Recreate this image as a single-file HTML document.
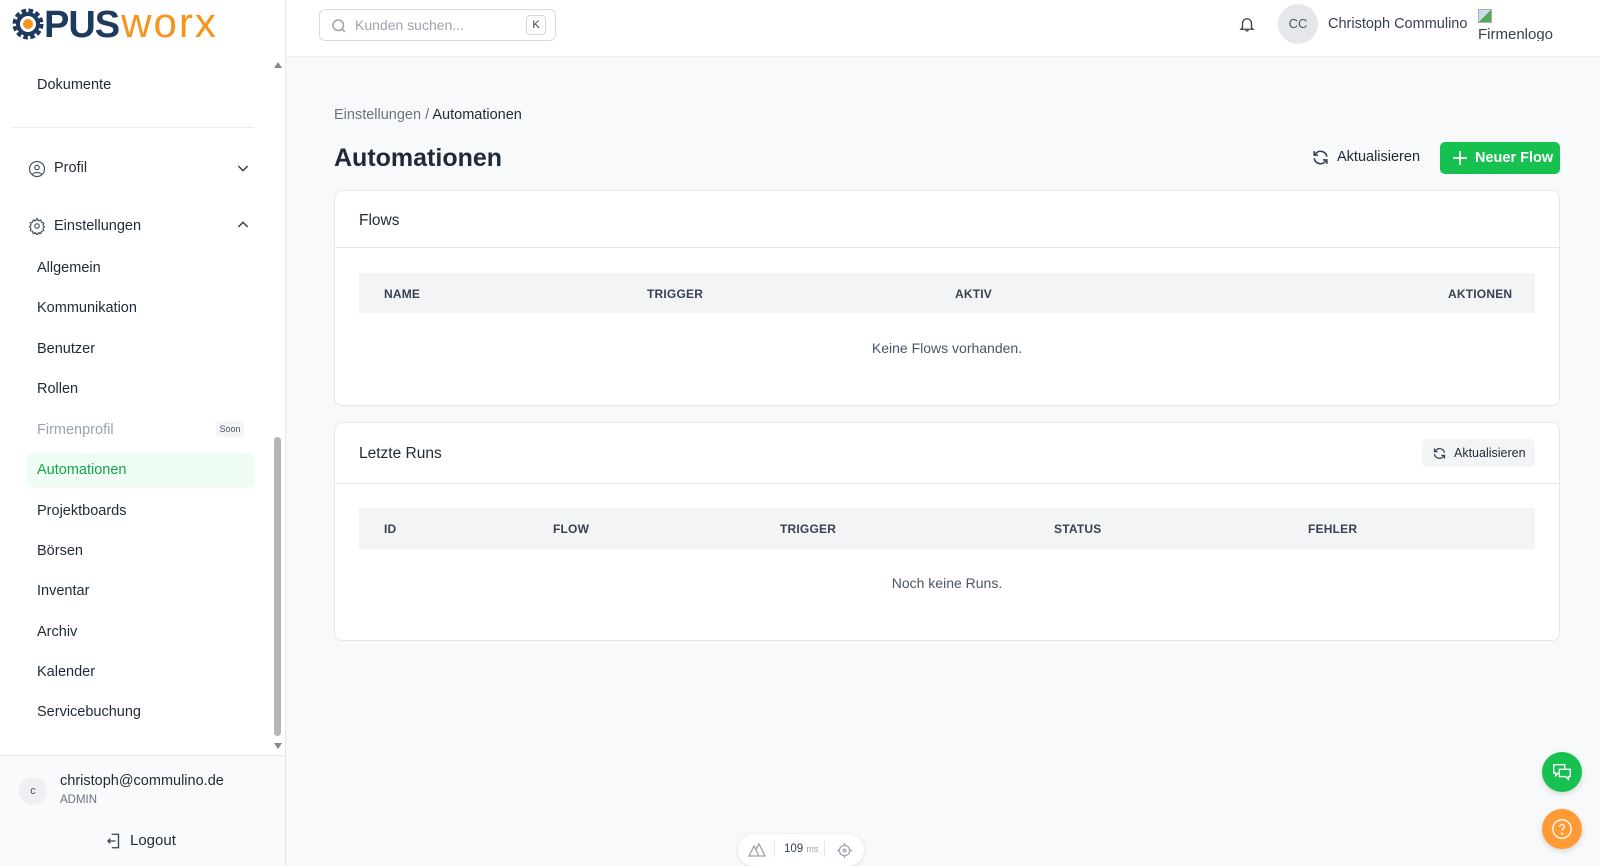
<!DOCTYPE html>
<html><head><meta charset="utf-8"><style>
*{box-sizing:border-box;margin:0;padding:0}
body{width:1600px;height:866px;overflow:hidden;background:#f8f9fb;font-family:"Liberation Sans",sans-serif;color:#1f2937;position:relative}
.abs{position:absolute}
.side{left:0;top:0;width:286px;height:866px;background:#fff;border-right:1px solid #e5e7eb}
.hdr{left:286px;top:0;width:1314px;height:57px;background:#fff;border-bottom:1px solid #eceef1}
.nav{position:absolute;left:37px;font-size:14.5px;color:#1f2937;font-weight:500}
.card{position:absolute;left:334px;width:1226px;background:#fff;border:1px solid #e5e7eb;border-radius:8px}
.th{position:absolute;font-size:12px;font-weight:700;color:#374151;letter-spacing:.2px}
</style></head><body>
<div class="abs side"></div>
<div class="abs hdr"></div>
<!-- logo -->
<div class="abs" style="left:12px;top:4px;font-size:38px;font-weight:900;color:#1e3a5f;letter-spacing:-1px;line-height:38px;white-space:nowrap">
<svg width="32" height="32" viewBox="0 0 32 32" style="vertical-align:-3px"><circle cx="16" cy="16" r="12" fill="none" stroke="#1e3a5f" stroke-width="7" stroke-dasharray="4 2.3"/><circle cx="16" cy="16" r="10" fill="none" stroke="#1e3a5f" stroke-width="4"/><circle cx="16" cy="16" r="5" fill="#f7941d"/></svg><span>PUS</span><span style="color:#f7941d;font-weight:400;letter-spacing:2px;font-size:42px;margin-left:2px">worx</span></div>
<!-- search -->
<div class="abs" style="left:319px;top:9px;width:237px;height:32px;border:1px solid #d9dde3;border-radius:6px;background:#fff">
<svg class="abs" style="left:10px;top:7px" width="18" height="18" viewBox="0 0 24 24" fill="none" stroke="#9ca3af" stroke-width="2"><circle cx="11" cy="11" r="7"/><path d="M20 20l-4-4"/></svg>
<span class="abs" style="left:35px;top:7px;font-size:14px;color:#9ca3af">Kunden suchen...</span>
<span class="abs" style="left:206px;top:5px;width:20px;height:20px;border:1px solid #d1d5db;border-radius:4px;font-size:11px;text-align:center;line-height:18px;color:#374151">K</span></div>
<!-- header right -->
<svg class="abs" style="left:1238px;top:15px" width="18" height="18" viewBox="0 0 24 24" fill="none" stroke="#374151" stroke-width="1.8"><path d="M6 17V11a6 6 0 0112 0v6l2 2H4z"/><path d="M10 21h4"/></svg>
<div class="abs" style="left:1278px;top:4px;width:40px;height:40px;border-radius:50%;background:#e5e7eb;font-size:13px;text-align:center;line-height:40px;color:#4b5563">CC</div>
<div class="abs" style="left:1328px;top:16px;font-size:14.5px;color:#374151">Christoph Commulino</div>
<div class="abs" style="left:1478px;top:9px;width:14px;height:14px;border:1px solid #aab;background:linear-gradient(135deg,#cde 50%,#5a5 50%)"></div>
<div class="abs" style="left:1478px;top:26px;width:82px;height:15px;overflow:hidden;font-size:15px;line-height:18px;color:#374151">Firmenlogo</div>
<!-- sidebar -->
<div class="nav" style="top:77px">Dokumente</div>
<div class="abs" style="left:11px;top:127px;width:243px;height:1px;background:#eceef1"></div>
<svg class="abs" style="left:28px;top:160px" width="18" height="18" viewBox="0 0 24 24" fill="none" stroke="#4b5563" stroke-width="1.6"><circle cx="12" cy="12" r="10"/><circle cx="12" cy="10" r="3"/><path d="M6 19c2-3 10-3 12 0"/></svg>
<div class="nav" style="left:54px;top:160px">Profil</div>
<svg class="abs" style="left:235px;top:160px" width="16" height="16" viewBox="0 0 24 24" fill="none" stroke="#374151" stroke-width="2.2"><path d="M5 9l7 7 7-7"/></svg>
<svg class="abs" style="left:28px;top:217px" width="18" height="18" viewBox="0 0 24 24" fill="none" stroke="#4b5563" stroke-width="1.6"><circle cx="12" cy="12" r="3"/><path d="M12 2l2 3 3-1 1 3 3 1-1 3 2 2-2 2 1 3-3 1-1 3-3-1-2 3-2-3-3 1-1-3-3-1 1-3-2-2 2-2-1-3 3-1 1-3 3 1z"/></svg>
<div class="nav" style="left:54px;top:218px">Einstellungen</div>
<svg class="abs" style="left:235px;top:217px" width="16" height="16" viewBox="0 0 24 24" fill="none" stroke="#374151" stroke-width="2.2"><path d="M5 15l7-7 7 7"/></svg>
<div class="nav" style="top:260px">Allgemein</div>
<div class="nav" style="top:300px">Kommunikation</div>
<div class="nav" style="top:341px">Benutzer</div>
<div class="nav" style="top:381px">Rollen</div>
<div class="nav" style="top:422px;color:#9ca3af">Firmenprofil</div>
<div class="abs" style="left:216px;top:421px;width:28px;height:16px;background:#f3f4f6;border-radius:4px;font-size:9px;text-align:center;line-height:16px;color:#4b5563">Soon</div>
<div class="abs" style="left:27px;top:453px;width:227px;height:35px;background:#f0fdf4;border-radius:6px"></div>
<div class="nav" style="top:462px;color:#16a34a">Automationen</div>
<div class="nav" style="top:503px">Projektboards</div>
<div class="nav" style="top:543px">Börsen</div>
<div class="nav" style="top:583px">Inventar</div>
<div class="nav" style="top:624px">Archiv</div>
<div class="nav" style="top:664px">Kalender</div>
<div class="nav" style="top:704px">Servicebuchung</div>
<div class="abs" style="left:274px;top:62px;border-left:4px solid transparent;border-right:4px solid transparent;border-bottom:6px solid #888"></div>
<div class="abs" style="left:274px;top:437px;width:7px;height:299px;background:#b5b5b5;border-radius:4px"></div>
<div class="abs" style="left:274px;top:743px;border-left:4px solid transparent;border-right:4px solid transparent;border-top:6px solid #888"></div>
<div class="abs" style="left:0;top:755px;width:285px;height:111px;background:#f9fafb;border-top:1px solid #e5e7eb"></div>
<div class="abs" style="left:19px;top:777px;width:28px;height:28px;border-radius:50%;background:#eef0f4;font-size:11px;text-align:center;line-height:28px;color:#4b5563">c</div>
<div class="abs" style="left:60px;top:773px;font-size:14.5px;color:#1f2937;font-weight:500">christoph@commulino.de</div>
<div class="abs" style="left:60px;top:794px;font-size:11.5px;color:#6b7280">ADMIN</div>
<svg class="abs" style="left:105px;top:832px" width="18" height="18" viewBox="0 0 24 24" fill="none" stroke="#374151" stroke-width="1.8"><path d="M9 3h9v18H9"/><path d="M14 12H4M7 9l-3 3 3 3"/></svg>
<div class="abs" style="left:130px;top:832px;font-size:15px;color:#1f2937;font-weight:500">Logout</div>
<!-- main -->
<div class="abs" style="left:334px;top:107px;font-size:14.5px;color:#6b7280">Einstellungen / <span style="color:#1f2937">Automationen</span></div>
<div class="abs" style="left:334px;top:144px;font-size:25px;font-weight:700;color:#1f2937">Automationen</div>
<svg class="abs" style="left:1311px;top:148px" width="19" height="19" viewBox="0 0 24 24" fill="none" stroke="#374151" stroke-width="2"><path d="M20 11a8 8 0 00-14-4l-2 2M4 4v5h5M4 13a8 8 0 0014 4l2-2M20 20v-5h-5"/></svg>
<div class="abs" style="left:1337px;top:149px;font-size:14.5px;color:#1f2937;font-weight:500">Aktualisieren</div>
<div class="abs" style="left:1440px;top:142px;width:120px;height:32px;background:#16c150;border-radius:5px;color:#fff;font-size:14.5px;font-weight:700;line-height:32px;padding-left:35px;white-space:nowrap">Neuer Flow</div>
<svg class="abs" style="left:1452px;top:150px" width="16" height="16" viewBox="0 0 16 16" stroke="#fff" stroke-width="1.8"><path d="M8 1v14M1 8h14"/></svg>
<div class="card" style="top:190px;height:216px">
<div class="abs" style="left:24px;top:21px;font-size:15.5px;font-weight:500">Flows</div>
<div class="abs" style="left:0;top:56px;width:100%;height:1px;background:#e5e7eb"></div>
<div class="abs" style="left:24px;top:82px;width:1176px;height:40px;background:#f3f4f6"></div>
<div class="th" style="left:49px;top:96px">NAME</div>
<div class="th" style="left:312px;top:96px">TRIGGER</div>
<div class="th" style="left:620px;top:96px">AKTIV</div>
<div class="th" style="left:1113px;top:96px">AKTIONEN</div>
<div class="abs" style="left:0;width:100%;top:149px;text-align:center;font-size:14px;color:#4b5563">Keine Flows vorhanden.</div>
</div>
<div class="card" style="top:422px;height:219px">
<div class="abs" style="left:24px;top:22px;font-size:15.5px;font-weight:500">Letzte Runs</div>
<div class="abs" style="left:1087px;top:16px;width:113px;height:28px;background:#f3f4f6;border-radius:5px;font-size:12.5px;font-weight:500;line-height:28px;padding-left:32px">Aktualisieren</div>
<svg class="abs" style="left:1097px;top:23px" width="15" height="15" viewBox="0 0 24 24" fill="none" stroke="#374151" stroke-width="2"><path d="M20 11a8 8 0 00-14-4l-2 2M4 4v5h5M4 13a8 8 0 0014 4l2-2M20 20v-5h-5"/></svg>
<div class="abs" style="left:0;top:60px;width:100%;height:1px;background:#e5e7eb"></div>
<div class="abs" style="left:24px;top:85px;width:1176px;height:41px;background:#f3f4f6"></div>
<div class="th" style="left:49px;top:99px">ID</div>
<div class="th" style="left:218px;top:99px">FLOW</div>
<div class="th" style="left:445px;top:99px">TRIGGER</div>
<div class="th" style="left:719px;top:99px">STATUS</div>
<div class="th" style="left:973px;top:99px">FEHLER</div>
<div class="abs" style="left:0;width:100%;top:152px;text-align:center;font-size:14px;color:#4b5563">Noch keine Runs.</div>
</div>
<!-- bottom pill -->
<div class="abs" style="left:738px;top:834px;width:126px;height:32px;background:#fff;border-radius:16px;box-shadow:0 1px 4px rgba(0,0,0,.12);font-size:11.5px;color:#374151">
<svg class="abs" style="left:10px;top:9px" width="18" height="14" viewBox="0 0 18 14" fill="none" stroke="#9ca3af" stroke-width="1.3"><path d="M1 13L6 3l5 10zM8 6l3-5 6 12h-5"/></svg>
<span class="abs" style="left:36px;top:7px;width:1px;height:16px;background:#e5e7eb"></span>
<span class="abs" style="left:46px;top:9px">109 <span style="font-size:9px;color:#9ca3af">ms</span></span>
<span class="abs" style="left:86px;top:7px;width:1px;height:16px;background:#e5e7eb"></span>
<svg class="abs" style="left:99px;top:9px" width="15" height="15" viewBox="0 0 16 16" fill="none" stroke="#9ca3af" stroke-width="1.3"><circle cx="8" cy="8" r="5.5"/><circle cx="8" cy="8" r="1.5"/><path d="M8 0v2.5M8 13.5V16M0 8h2.5M13.5 8H16"/></svg></div>
<!-- fabs -->
<div class="abs" style="left:1542px;top:752px;width:40px;height:40px;border-radius:50%;background:#16c150;box-shadow:0 2px 6px rgba(0,0,0,.15)">
<svg class="abs" style="left:9px;top:9px" width="22" height="22" viewBox="0 0 24 24" fill="none" stroke="#fff" stroke-width="1.5"><path d="M3 4h12v9H8l-3 3v-3H3z"/><path d="M9 9h12v8h-2v3l-3-3H9z" fill="#16c150"/></svg></div>
<div class="abs" style="left:1542px;top:809px;width:40px;height:40px;border-radius:50%;background:#ff9a35;box-shadow:0 2px 6px rgba(0,0,0,.15)">
<svg class="abs" style="left:9px;top:9px" width="22" height="22" viewBox="0 0 24 24" fill="none" stroke="#fff" stroke-width="1.5"><circle cx="12" cy="12" r="10"/><path d="M9.5 9.5a2.5 2.5 0 115 0c0 2-2.5 2-2.5 4"/><circle cx="12" cy="17" r=".6" fill="#fff"/></svg></div>
</body></html>
